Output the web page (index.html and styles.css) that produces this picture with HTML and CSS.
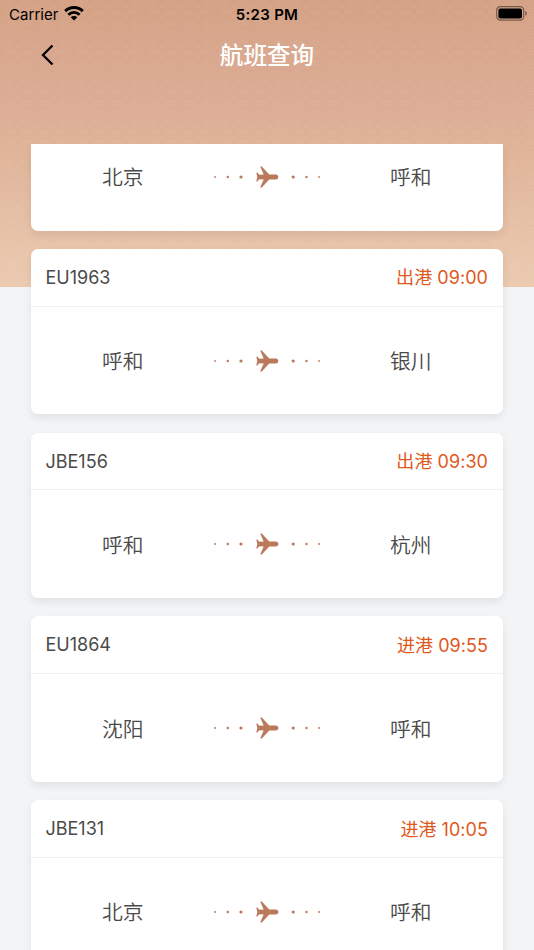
FILE: index.html
```
<!DOCTYPE html>
<html lang="zh-CN">
<head>
<meta charset="utf-8">
<title>航班查询</title>
<link rel="stylesheet" href="styles.css">
</head>
<body>
<svg class="defs" width="0" height="0" aria-hidden="true">
  <symbol id="route" viewBox="0 0 108 24">
    <g fill="#b9795a">
      <circle cx="2" cy="12" r="0.9"/><circle cx="14.8" cy="12" r="1.2"/><circle cx="28" cy="12" r="1.6"/>
      <circle cx="80.2" cy="12" r="1.6"/><circle cx="93.5" cy="12" r="1.2"/><circle cx="106" cy="12" r="0.9"/>
      <path d="M43.300 7.500h1.100l1.900 2.200 4.400-.2-3.500-8h1.600l7.400 8h6.700c1.400 0 2.400 1.100 2.400 2.500s-1 2.500-2.400 2.500h-6.700l-7.400 8h-1.600l3.500-8-4.400-.2-1.900 2.200h-1.100l1-4.500z"/>
    </g>
  </symbol>
</svg>
<div class="screen">
  <svg class="backdrop" width="534" height="287" aria-hidden="true">
    <defs>
      <pattern id="scales" width="18" height="10" patternUnits="userSpaceOnUse">
        <g fill="none" stroke="#fff" stroke-width="0.8">
          <path d="M0 9a9 8 0 0 1 18 0M3 9a6 5 0 0 1 12 0M6 9a3 2.500 0 0 1 6 0"/>
          <path d="M-9 4a9 8 0 0 1 18 0M9 4a9 8 0 0 1 18 0M-6 4a6 5 0 0 1 12 0M12 4a6 5 0 0 1 12 0"/>
        </g>
      </pattern>
    </defs>
    <rect width="534" height="287" fill="url(#scales)" opacity="0.07"/>
  </svg>
  <header class="status">
    <div class="carrier">Carrier
      <svg width="20" height="15" viewBox="0 0 20 15"><g fill="none" stroke="#000" stroke-width="2.900"><path d="M1.200 5.100a12.600 12.600 0 0 1 17.600 0"/><path d="M4.400 8.700a8 8 0 0 1 11.200 0"/></g><path d="M10 14.500l-3.300-3.200a4.600 4.600 0 0 1 6.600 0z"/></svg>
    </div>
    <div class="clock">5:23 PM</div>
    <svg class="battery" width="32" height="15" viewBox="0 0 32 15"><rect x=".7" y=".7" width="27" height="13.400" rx="3.600" fill="none" stroke="#000" stroke-opacity=".45" stroke-width="1.200"/><rect x="2.400" y="2.400" width="23.600" height="10" rx="2"/><path d="M29.400 5.100c1.900.7 1.900 4 0 4.700z" opacity=".5"/></svg>
  </header>
  <nav class="nav">
    <svg class="back" width="14" height="22" viewBox="0 0 14 22"><path d="M12.500 1.500L3 11l9.500 9.500" fill="none" stroke="#000" stroke-width="2.300"/></svg>
    <h1>航班查询</h1>
  </nav>
  <main class="list">
    <article class="card partial">
      <div class="trip"><span>北京</span><svg class="route"><use href="#route"/></svg><span>呼和</span></div>
    </article>
    <article class="card">
      <div class="head"><span>EU1963</span><span class="time">出港 09:00</span></div>
      <div class="trip"><span>呼和</span><svg class="route"><use href="#route"/></svg><span>银川</span></div>
    </article>
    <article class="card">
      <div class="head"><span>JBE156</span><span class="time">出港 09:30</span></div>
      <div class="trip"><span>呼和</span><svg class="route"><use href="#route"/></svg><span>杭州</span></div>
    </article>
    <article class="card">
      <div class="head"><span>EU1864</span><span class="time">进港 09:55</span></div>
      <div class="trip"><span>沈阳</span><svg class="route"><use href="#route"/></svg><span>呼和</span></div>
    </article>
    <article class="card">
      <div class="head"><span>JBE131</span><span class="time">进港 10:05</span></div>
      <div class="trip"><span>北京</span><svg class="route"><use href="#route"/></svg><span>呼和</span></div>
    </article>
  </main>
</div>
</body>
</html>
```
FILE: styles.css
```
* { box-sizing: border-box; }
body {
  margin: 0;
  font-family: Inter, "Noto Sans CJK SC", sans-serif;
  color: #4a4a4a;
}
.defs { position: absolute; }
.screen {
  position: relative;
  width: 534px;
  height: 950px;
  overflow: hidden;
  display: flex;
  flex-direction: column;
  background: linear-gradient(#d4a184 0, #dbab93 95px, #dfb398 150px, #ebcab0 287px) top / 100% 287px no-repeat #f2f4f6;
}
.backdrop { position: absolute; top: 0; left: 0; }
.status, .nav, .list { position: relative; }
.status {
  height: 28px;
  display: grid;
  grid-template-columns: 1fr auto 1fr;
  align-items: center;
  padding: 0 6px 0 9px;
  color: #000;
  font-size: 15px;
}
.carrier { display: flex; align-items: center; gap: 5px; letter-spacing: .05px; }
.carrier svg { margin-top: -2px; }
.clock { font-weight: 600; letter-spacing: .3px; margin-left: -3px; }
.battery { justify-self: end; margin-top: -1px; }
.nav {
  height: 116px;
  flex: none;
  display: flex;
  justify-content: center;
}
.back { position: absolute; left: 40px; top: 15.500px; }
h1 {
  margin: 10px 0 0;
  height: 35px;
  line-height: 35px;
  font-size: 23.6px;
  font-weight: 500;
  color: #fff;
}
.list {
  flex: 1;
  min-height: 0;
  overflow: hidden;
  padding: 0 28px 0 31px;
  display: flex;
  flex-direction: column;
  gap: 18.3px;
}
.card {
  flex: none;
  width: 472px;
  height: 165.5px;
  border-radius: 7px;
  background: #fff;
  box-shadow: 0 4px 9px rgba(0, 0, 0, .08);
}
.partial {
  height: 86.600px;
  border-radius: 0 0 7px 7px;
  display: flex;
  flex-direction: column;
  justify-content: flex-end;
}
.head {
  height: 57.7px;
  padding: 0 15px 0 14.500px;
  display: flex;
  align-items: center;
  justify-content: space-between;
  border-bottom: 1px solid #f0f1f2;
  font-size: 18px;
}
.time { color: #e0581b; font-weight: 390; letter-spacing: .05px; margin-top: -2px; }
.trip {
  height: 108px;
  flex: none;
  display: flex;
  align-items: center;
  justify-content: space-between;
  padding: 0 71.500px 0 71px;
  font-size: 20.800px;
  font-weight: 350;
}
.trip span { margin-top: -1px; }
.partial .trip { height: 107.500px; }
.route { width: 108px; height: 24px; }
```
